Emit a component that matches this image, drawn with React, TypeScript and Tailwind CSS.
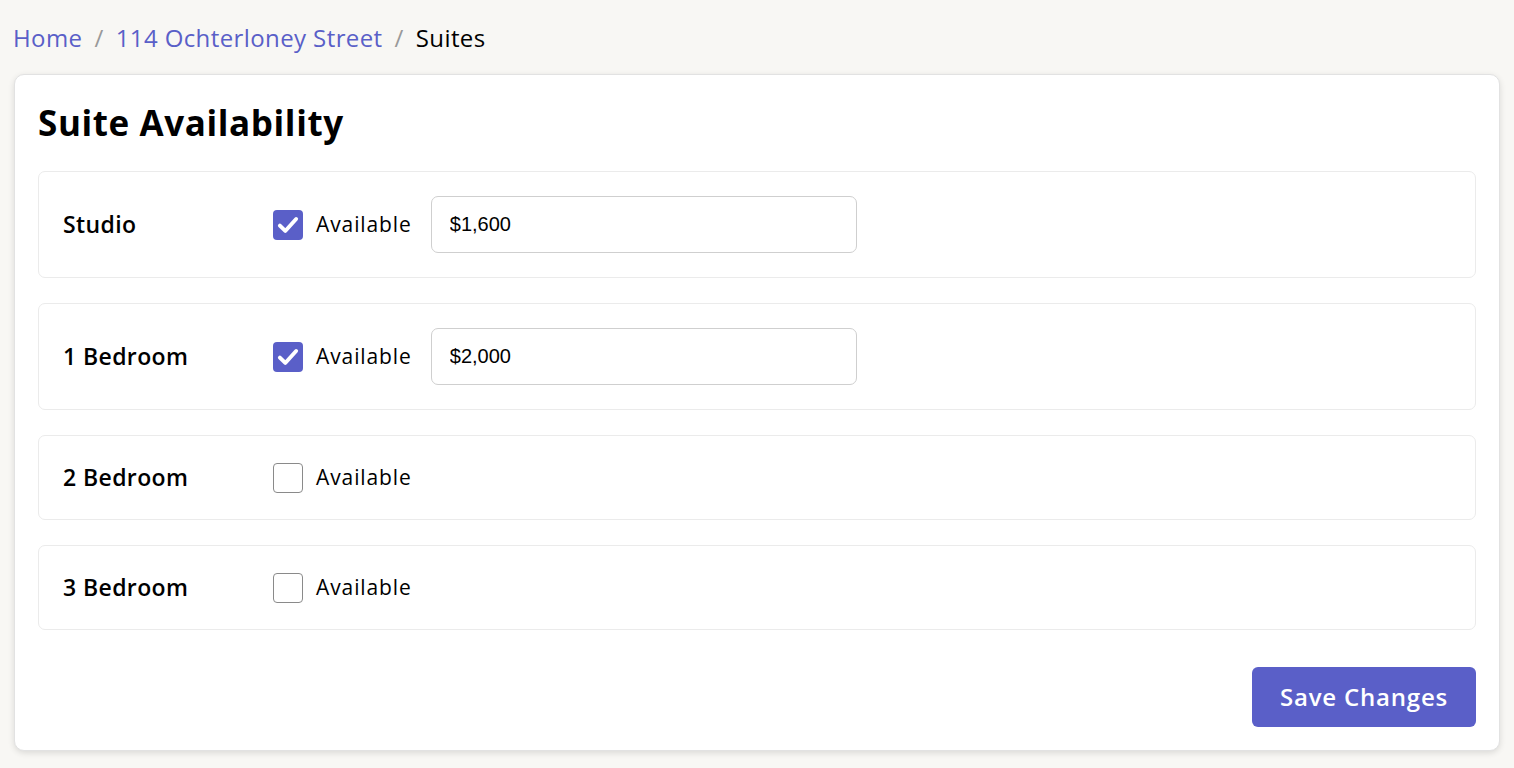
import { useState } from "react";

type Suite = { name: string; available: boolean; price: string };

const initialSuites: Suite[] = [
  { name: "Studio", available: true, price: "$1,600" },
  { name: "1 Bedroom", available: true, price: "$2,000" },
  { name: "2 Bedroom", available: false, price: "" },
  { name: "3 Bedroom", available: false, price: "" },
];

function Checkbox({ checked, onChange }: { checked: boolean; onChange: () => void }) {
  return (
    <button
      type="button"
      onClick={onChange}
      className={
        checked
          ? "w-[30px] h-[30px] rounded-[4px] bg-[#5a5fc8] flex items-center justify-center"
          : "w-[30px] h-[30px] rounded-[4px] bg-white border border-[#8a8a8a]"
      }
    >
      {checked && (
        <svg viewBox="0 0 24 24" className="w-[26px] h-[26px]" fill="none" stroke="white" strokeWidth="3.6" strokeLinecap="round" strokeLinejoin="round">
          <path d="M4.5 12.5l5 5L19.5 6.5" />
        </svg>
      )}
    </button>
  );
}

export default function App() {
  const [suites, setSuites] = useState(initialSuites);

  const toggle = (i: number) =>
    setSuites((s) => s.map((x, j) => (j === i ? { ...x, available: !x.available } : x)));

  return (
    <div className="min-h-screen bg-[#f8f7f4] px-[14px] pt-[20px] pb-4 font-['Open_Sans',sans-serif] text-black">
      <nav className="flex items-center text-[24px] leading-[36px] tracking-[0.4px] -ml-[1px]">
        <a href="#" className="text-[#5a5fc8]">Home</a>
        <span className="mx-[12px] text-[#9a9a9a]">/</span>
        <a href="#" className="text-[#5a5fc8]">114 Ochterloney Street</a>
        <span className="mx-[12px] text-[#9a9a9a]">/</span>
        <span>Suites</span>
      </nav>

      <div className="mt-[18px] bg-white rounded-[10px] border border-[#e2e2e2] shadow-[0_2px_6px_rgba(0,0,0,0.12)] px-[23px] pt-[23px] pb-[23px]">
        <h1 className="text-[35px] leading-[50px] font-bold tracking-[0.6px]">Suite Availability</h1>

        <div className="mt-[23px] flex flex-col gap-[25px]">
          {suites.map((s, i) => (
            <div key={s.name} className="flex items-center border border-[#ebebeb] rounded-[7px] px-[24px] py-[24px]">
              <div className="w-[210px] text-[23px] leading-[35px] font-semibold tracking-[0.4px]">{s.name}</div>
              <label className="flex items-center gap-[13px]">
                <Checkbox checked={s.available} onChange={() => toggle(i)} />
                <span className="text-[21px] leading-[35px] tracking-[0.9px]">Available</span>
              </label>
              {s.available && (
                <input
                  value={s.price}
                  onChange={(e) =>
                    setSuites((all) => all.map((x, j) => (j === i ? { ...x, price: e.target.value } : x)))
                  }
                  className="ml-[19px] w-[426px] h-[57px] rounded-[7px] border border-[#cfcfcf] px-[18px] text-[20px] font-['Liberation_Sans',sans-serif] outline-none"
                />
              )}
            </div>
          ))}
        </div>

        <div className="mt-[37px] flex justify-end">
          <button className="w-[224px] h-[60px] rounded-[6px] bg-[#5a5fc8] text-white text-[24px] font-semibold tracking-[0.8px]">
            Save Changes
          </button>
        </div>
      </div>
    </div>
  );
}
